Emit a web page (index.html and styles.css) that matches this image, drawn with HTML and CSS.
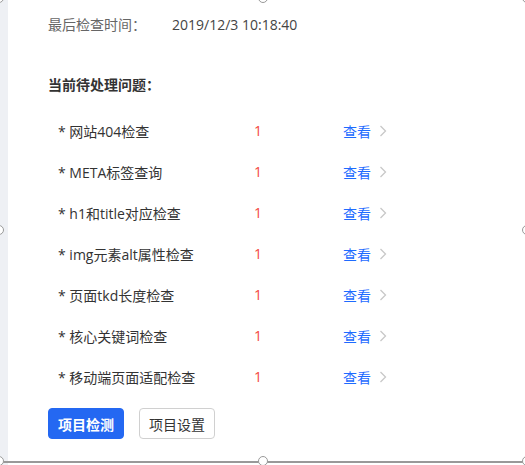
FILE: index.html
```html
<!DOCTYPE html>
<html lang="zh-CN">
<head>
  <meta charset="UTF-8" />
  <title>项目检测</title>
  <link rel="stylesheet" href="styles.css">
</head>
<body>

<div class="stage">
  <div class="side-strip"></div>

  <div class="panel">
    <div class="last-check">
      <span class="label">最后检查时间：</span>
      <span class="time">2019/12/3 10:18:40</span>
    </div>

    <h3 class="issues-title">当前待处理问题：</h3>

    <ul class="issues">
      <li class="issue"><span class="name">* 网站404检查</span><span class="count">1</span><a class="view">查看<svg class="chev" viewBox="0 0 8 12"><polyline points="1.5,1 6.5,6 1.5,11"/></svg></a></li>
      <li class="issue"><span class="name">* META标签查询</span><span class="count">1</span><a class="view">查看<svg class="chev" viewBox="0 0 8 12"><polyline points="1.5,1 6.5,6 1.5,11"/></svg></a></li>
      <li class="issue"><span class="name">* h1和title对应检查</span><span class="count">1</span><a class="view">查看<svg class="chev" viewBox="0 0 8 12"><polyline points="1.5,1 6.5,6 1.5,11"/></svg></a></li>
      <li class="issue"><span class="name">* img元素alt属性检查</span><span class="count">1</span><a class="view">查看<svg class="chev" viewBox="0 0 8 12"><polyline points="1.5,1 6.5,6 1.5,11"/></svg></a></li>
      <li class="issue"><span class="name">* 页面tkd长度检查</span><span class="count">1</span><a class="view">查看<svg class="chev" viewBox="0 0 8 12"><polyline points="1.5,1 6.5,6 1.5,11"/></svg></a></li>
      <li class="issue"><span class="name">* 核心关键词检查</span><span class="count">1</span><a class="view">查看<svg class="chev" viewBox="0 0 8 12"><polyline points="1.5,1 6.5,6 1.5,11"/></svg></a></li>
      <li class="issue"><span class="name">* 移动端页面适配检查</span><span class="count">1</span><a class="view">查看<svg class="chev" viewBox="0 0 8 12"><polyline points="1.5,1 6.5,6 1.5,11"/></svg></a></li>
    </ul>

    <div class="button-row">
      <button class="btn btn-primary">项目检测</button>
      <button class="btn">项目设置</button>
    </div>
  </div>

  <!-- selection frame of the editor -->
  <div class="select-frame">
    <span class="handle h-tl"></span>
    <span class="handle h-tm"></span>
    <span class="handle h-tr"></span>
    <span class="handle h-ml"></span>
    <span class="handle h-mr"></span>
    <span class="handle h-bl"></span>
    <span class="handle h-bm"></span>
    <span class="handle h-br"></span>
  </div>
</div>

</body>
</html>
```

FILE: styles.css
```css
body {
  margin: 0;
  font-family: "Open Sans", "Noto Sans CJK SC", sans-serif;
  font-size: 14px;
  color: #333;
  background: #fff;
}
.stage {
  position: relative;
  display: flex;
  width: 525px;
  height: 465px;
  overflow: hidden;
}
.side-strip {
  width: 8px;
  background: #eef0f4;
}
.panel {
  flex: 1;
  padding: 15px 0 0 40px;
}
.last-check {
  display: flex;
  line-height: 20px;
}
.last-check .label {
  width: 124px;
  color: #666;
}
.last-check .time {
  color: #444;
}
.issues-title {
  margin: 40px 0 0;
  font-size: 14px;
  font-weight: bold;
  line-height: 20px;
  color: #333;
}
.issues {
  list-style: none;
  margin: 15px 0 0;
  padding: 0 0 0 10px;
}
.issue {
  display: grid;
  grid-template-columns: 196px 89px auto;
  align-items: center;
  height: 41px;
}
.issue .name {
  color: #333;
}
.issue .count {
  color: #f4473c;
}
.view {
  display: flex;
  align-items: center;
  color: #1e6bff;
  cursor: pointer;
}
.chev {
  width: 8px;
  height: 12px;
  margin-left: 8px;
  fill: none;
  stroke: #c8c8c8;
  stroke-width: 1.3;
}
.button-row {
  display: flex;
  gap: 15px;
  margin-top: 11px;
}
.btn {
  height: 31px;
  padding: 0 9px;
  font-family: inherit;
  font-size: 14px;
  white-space: nowrap;
  color: #333;
  background: #fff;
  border: 1px solid #d0d0d0;
  border-radius: 4px;
  cursor: pointer;
}
.btn-primary {
  width: 76px;
  padding: 0;
  color: #fff;
  font-weight: bold;
  background: #2468f2;
  border-color: #2468f2;
}
.select-frame {
  position: absolute;
  left: -1px;
  right: -2px;
  top: -2px;
  height: 463px;
  border-bottom: 2px solid #999;
  pointer-events: none;
}
.handle {
  position: absolute;
  width: 8px;
  height: 8px;
  background: #fff;
  border: 1.5px solid #999;
  border-radius: 50%;
  transform: translate(-50%, -50%);
}
.h-tl { left: 0; top: 0; }
.h-tm { left: 50%; top: 0; }
.h-tr { left: 100%; top: 0; }
.h-ml { left: 0; top: 50%; }
.h-mr { left: 100%; top: 50%; }
.h-bl { left: 0; top: 100%; }
.h-bm { left: 50%; top: 100%; }
.h-br { left: 100%; top: 100%; }
```
